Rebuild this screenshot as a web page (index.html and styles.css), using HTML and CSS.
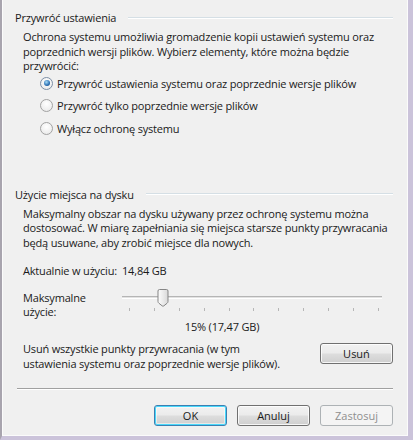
FILE: index.html
```html
<!DOCTYPE html>
<html lang="pl">
<head>
<meta charset="utf-8">
<link rel="stylesheet" href="styles.css">
</head>
<body>
<div class="window">
  <section class="group">
    <div class="group-head"><span>Przywróć ustawienia</span><i class="rule"></i></div>
    <p class="text">Ochrona systemu umożliwia gromadzenie kopii ustawień systemu oraz<br>poprzednich wersji plików. Wybierz elementy, które można będzie<br>przywrócić:</p>
    <div class="radios">
      <label class="radio"><span class="dot checked"></span>Przywróć ustawienia systemu oraz poprzednie wersje plików</label>
      <label class="radio"><span class="dot"></span>Przywróć tylko poprzednie wersje plików</label>
      <label class="radio"><span class="dot"></span>Wyłącz ochronę systemu</label>
    </div>
  </section>

  <section class="group group2">
    <div class="group-head"><span>Użycie miejsca na dysku</span><i class="rule"></i></div>
    <p class="text">Maksymalny obszar na dysku używany przez ochronę systemu można<br>dostosować. W miarę zapełniania się miejsca starsze punkty przywracania<br>będą usuwane, aby zrobić miejsce dla nowych.</p>
    <div class="usage"><span class="usage-label">Aktualnie w użyciu:</span><span>14,84 GB</span></div>
    <div class="max-row">
      <span class="max-label">Maksymalne<br>użycie:</span>
      <div class="slider">
        <div class="track"></div>
        <svg class="thumb" width="12" height="18" viewBox="0 0 12 18">
          <defs>
            <linearGradient id="tg" x1="0" y1="0" x2="1" y2="0">
              <stop offset="0" stop-color="#fdfdfd"/>
              <stop offset="1" stop-color="#d8d8d8"/>
            </linearGradient>
          </defs>
          <path d="M2.5 0.5 H9.5 A1.5 1.5 0 0 1 11 2 V12.5 Q11 13.5 10 14.3 L6.8 16.9 Q6 17.5 5.2 16.9 L2 14.3 Q1 13.5 1 12.5 V2 A1.5 1.5 0 0 1 2.5 0.5 Z" fill="url(#tg)" stroke="#858585" stroke-width="1"/>
        </svg>
        <div class="ticks">
          <i></i><i></i><i></i><i></i><i></i><i></i><i></i><i></i><i></i><i></i><i></i>
        </div>
      </div>
    </div>
    <div class="percent">15% (17,47 GB)</div>
    <div class="delete-row">
      <p class="delete-text">Usuń wszystkie punkty przywracania (w tym<br>ustawienia systemu oraz poprzednie wersje plików).</p>
      <button class="btn">Usuń</button>
    </div>
  </section>

  <hr class="sep">

  <div class="actions">
    <button class="btn default">OK</button>
    <button class="btn">Anuluj</button>
    <button class="btn disabled">Zastosuj</button>
  </div>
</div>
</body>
</html>
```

FILE: styles.css
```css
* { box-sizing: border-box; }
html, body { margin: 0; padding: 0; }
body {
  width: 413px;
  height: 440px;
  overflow: hidden;
  background: #f0f0f0;
  font-family: "Open Sans", "Noto Sans", sans-serif;
  font-size: 11px;
  letter-spacing: -0.18px;
  color: #1a1a1a;
}
.window {
  width: 413px;
  height: 440px;
  background: #f0f0f0;
  border-left: 2px solid #a8a4ae;
  border-right: 5px solid #cbc3da;
  border-bottom: 4px solid #cbc3da;
  box-shadow: inset 1px 0 0 #fbfbfb, inset -1px -1px 0 #fbfbfb;
  padding: 10px 15px 0 13px;
}
.group-head {
  display: flex;
  align-items: center;
  height: 15px;
  line-height: 15px;
  white-space: nowrap;
}
.rule {
  flex: 1;
  height: 2px;
  border-top: 1px solid #d5dfe5;
  border-bottom: 1px solid #ffffff;
  margin-left: 12px;
}
.text {
  margin: 5px 0 0 8px;
  line-height: 14.5px;
  white-space: nowrap;
}
.radios {
  margin: 2px 0 0 25px;
  display: flex;
  flex-direction: column;
  gap: 7.5px;
}
.radio {
  display: flex;
  align-items: center;
  height: 15px;
  line-height: 15px;
  white-space: nowrap;
}
.dot {
  width: 13px;
  height: 13px;
  border-radius: 50%;
  border: 1px solid #a2a2a2;
  background: radial-gradient(circle at 50% 35%, #ffffff 0%, #e6e6e6 100%);
  margin-right: 4px;
  flex: none;
  position: relative;
}
.dot.checked {
  border-color: #7c8fa6;
}
.dot.checked::after {
  content: "";
  position: absolute;
  left: 2.5px;
  top: 2.5px;
  width: 6px;
  height: 6px;
  border-radius: 50%;
  background: radial-gradient(circle at 40% 35%, #a6dbf7 0%, #2a6fb3 60%, #16457a 100%);
}
.group2 {
  margin-top: 51px;
}
.usage {
  margin: 13px 0 0 8px;
  line-height: 15px;
  display: flex;
  white-space: nowrap;
}
.usage-label {
  width: 99px;
}
.max-row {
  margin: 12px 0 0 8px;
  display: flex;
}
.max-label {
  width: 99px;
  line-height: 14px;
  margin-top: 1px;
}
.slider {
  position: relative;
  width: 262px;
  height: 30px;
  margin-top: 6px;
}
.track {
  position: absolute;
  left: 0;
  top: 0;
  width: 260px;
  height: 3px;
  border-top: 1px solid #b5b5b5;
  border-bottom: 1px solid #ffffff;
  background: #e2e2e2;
}
.thumb {
  position: absolute;
  left: 35px;
  top: -7px;
  display: block;
}
.ticks {
  position: absolute;
  left: 7px;
  top: 12px;
  width: 250px;
  display: flex;
  justify-content: space-between;
}
.ticks i {
  width: 1px;
  height: 3px;
  background: #b6b6b6;
}
.percent {
  text-align: center;
  margin-top: -7px;
  padding-left: 36px;
  line-height: 15px;
}
.delete-row {
  margin: 8px 0 0 8px;
  display: flex;
  align-items: flex-start;
  justify-content: space-between;
}
.delete-text {
  margin: 0;
  line-height: 14.5px;
  white-space: nowrap;
}
.btn {
  width: 73px;
  height: 21px;
  font: inherit;
  color: #1a1a1a;
  border: 1px solid #707070;
  border-radius: 3px;
  background: linear-gradient(#f2f2f2 0%, #ebebeb 48%, #dddddd 52%, #cfcfcf 100%);
  box-shadow: inset 0 0 0 1px rgba(255,255,255,0.8);
  padding: 0;
  line-height: 19px;
}
.delete-row .btn {
  margin-top: 1px;
}
.btn.default {
  border-color: #3c7fb1;
  box-shadow: inset 0 0 0 1px #48d8fb, inset 0 0 0 2px rgba(255,255,255,0.5);
}
.btn.disabled {
  border-color: #adb2b5;
  background: #f4f4f4;
  color: #8f8f8f;
  box-shadow: none;
}
.sep {
  margin: 17px 0 0 2px;
  border: 0;
  height: 2px;
  border-top: 1px solid #a0a0a0;
  border-bottom: 1px solid #ffffff;
}
.actions {
  margin-top: 15px;
  display: flex;
  justify-content: flex-end;
  gap: 10px;
}
```
